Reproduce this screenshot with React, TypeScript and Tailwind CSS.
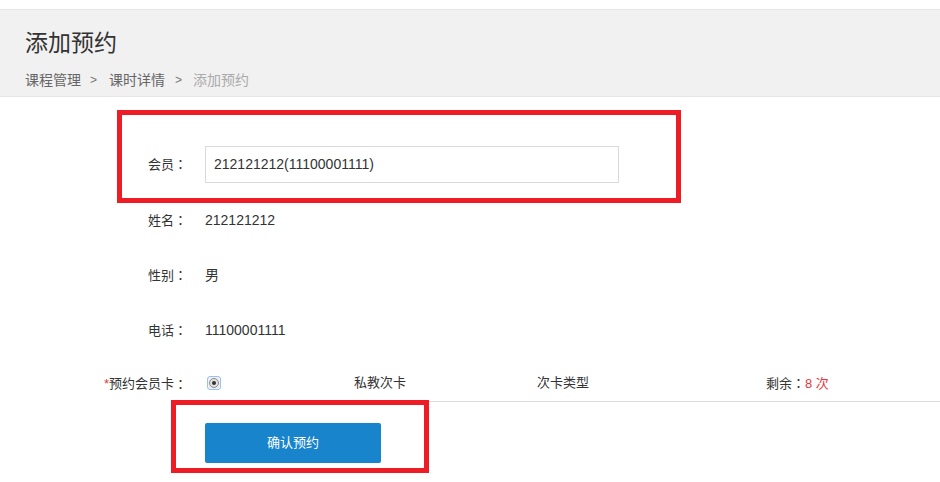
import React from 'react';

const font = { fontFamily: '"Liberation Sans", "Noto Sans CJK SC", sans-serif' };

// centred full-width colon, as in the reference
const Colon = () => <span style={{ fontFamily: '"Noto Sans CJK JP", sans-serif' }}>：</span>;

const Row = ({ label, children }: { label: string; children: React.ReactNode }) => (
  <div className="flex h-[55px] items-center">
    <div className="w-[187px] shrink-0 text-right text-[13px] text-[#333]">
      {label}
      <Colon />
    </div>
    <div className="pl-[18px] text-[14px] text-[#333]">{children}</div>
  </div>
);

const App = () => {
  return (
    <div className="relative h-[482px] w-[940px] overflow-hidden bg-white" style={font}>
      {/* Header */}
      <div className="mt-[9px] h-[88px] border-y border-[#e6e6e6] bg-[#f1f1f1] px-[25px] pt-[15px]">
        <h1 className="text-[23px] leading-[36px] text-[#333]">添加预约</h1>
        <div className="mt-[9px] flex items-center text-[14px] leading-[20px] text-[#666]">
          <span>课程管理</span>
          <span className="ml-[9px] mr-[12px] text-[12px] text-[#777]">&gt;</span>
          <span>课时详情</span>
          <span className="ml-[10px] mr-[11px] text-[12px] text-[#777]">&gt;</span>
          <span className="text-[#aaa]">添加预约</span>
        </div>
      </div>

      {/* Form */}
      <div className="pt-[49px]">
        <div className="flex h-[37px] items-center">
          <div className="w-[187px] shrink-0 text-right text-[13px] text-[#333]">
            会员
            <Colon />
          </div>
          <div className="pl-[18px]">
            <div className="flex h-[37px] w-[414px] items-center border border-[#d9d9d9] px-[8px] text-[14px] text-[#333]">
              212121212(11100001111)
            </div>
          </div>
        </div>

        <div className="mt-[10px]">
          <Row label="姓名">212121212</Row>
          <Row label="性别">男</Row>
          <Row label="电话">11100001111</Row>
        </div>

        {/* Card row */}
        <div className="flex h-[44px]">
          <div className="flex w-[187px] shrink-0 items-center justify-end pt-[7px] text-[13px] text-[#333]">
            <span className="text-[#e4393c]">*</span>预约会员卡
            <Colon />
          </div>
          <div className="ml-[13px] flex flex-1 items-center border-b border-[#dcdcdc] pt-[7px] text-[13px] text-[#333]">
            <div className="w-[154px] pl-[7px]">
              <span className="flex h-[14px] w-[14px] items-center justify-center rounded-[3px] border border-[#9cc0f0] bg-[#f0f0f0]">
                <span className="flex h-[10px] w-[10px] items-center justify-center rounded-full border border-[#8a8a8a] bg-[#e2e2e2]">
                  <span className="h-[4px] w-[4px] rounded-full bg-[#333]" />
                </span>
              </span>
            </div>
            <div className="w-[183px]">私教次卡</div>
            <div className="w-[229px]">次卡类型</div>
            <div>
              剩余
              <Colon />
              <span className="text-[#e4393c]">8 次</span>
            </div>
          </div>
        </div>

        <div className="ml-[205px] mt-[21px]">
          <button className="h-[40px] w-[176px] rounded-[2px] bg-[#1784cc] text-[13px] text-white">确认预约</button>
        </div>
      </div>

      {/* Annotation boxes */}
      <div className="absolute left-[117px] top-[110px] h-[93px] w-[564px] border-[5px] border-[#ee1c25]" />
      <div className="absolute left-[171px] top-[400px] h-[73px] w-[258px] border-[5px] border-[#ee1c25]" />
    </div>
  );
};

export default App;
